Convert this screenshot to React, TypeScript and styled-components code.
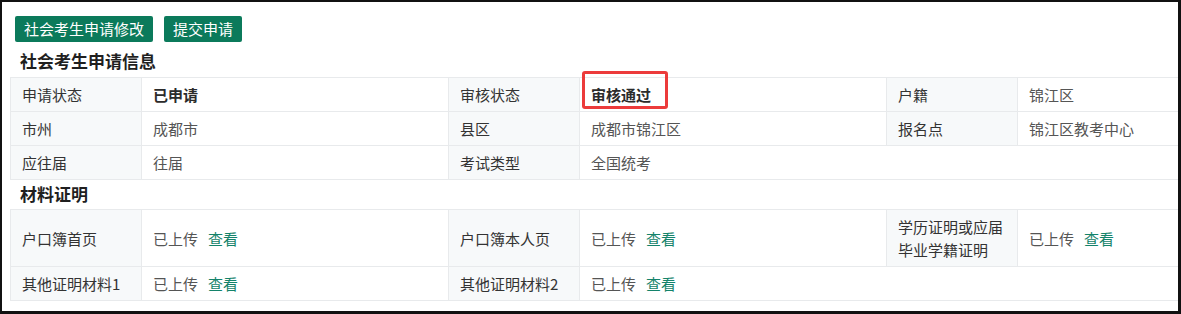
import React from "react";
import styled, { createGlobalStyle } from "styled-components";

const GlobalStyle = createGlobalStyle`
  html, body { margin: 0; padding: 0; background: #fff; }
  body { font-family: "Noto Sans CJK SC", "Noto Sans", sans-serif; }
  * { box-sizing: border-box; }
`;

const Frame = styled.div`
  width: 1181px;
  height: 314px;
  border-style: solid;
  border-color: #111;
  border-width: 2px 3px 3px 2px;
  background: #fff;
  overflow: hidden;
  padding: 0 0 0 8px;
`;

const Toolbar = styled.div`
  display: flex;
  gap: 11px;
  padding: 14px 0 0 5px;
`;

const Button = styled.button`
  height: 26px;
  padding: 0 9px;
  border: none;
  border-radius: 2px;
  background: #0b7a5b;
  color: #fff;
  font-family: inherit;
  font-size: 15px;
  line-height: 26px;
  cursor: pointer;
`;

const SectionTitle = styled.div<{ $top: number; $bottom: number }>`
  font-size: 17px;
  font-weight: 700;
  color: #1f1f1f;
  line-height: 24px;
  padding: ${(p) => p.$top}px 10px ${(p) => p.$bottom}px 10px;
`;

const Table = styled.table`
  width: 1314px;
  table-layout: fixed;
  border-collapse: collapse;
  font-size: 15px;
  line-height: 23px;
`;

const LabelCol = styled.col`
  width: 131px;
`;

const ValueCol = styled.col`
  width: 307px;
`;

const LabelCell = styled.td`
  padding: 5px 11px;
  background: #f7f9fa;
  color: #333;
  border: 1px solid #e8eaec;
  vertical-align: middle;
`;

const ValueCell = styled.td<{ $bold?: boolean }>`
  padding: 5px 11px;
  color: ${(p) => (p.$bold ? "#2b2b2b" : "#555")};
  font-weight: ${(p) => (p.$bold ? 700 : 400)};
  border: 1px solid #e8eaec;
  vertical-align: middle;
  position: relative;
`;

const Highlight = styled.span`
  position: absolute;
  left: 2px;
  top: -7px;
  width: 86px;
  height: 38px;
  border: 3px solid #ec3b3b;
  border-radius: 3px;
  pointer-events: none;
`;

const ViewLink = styled.a`
  margin-left: 10px;
  color: #14836a;
  text-decoration: none;
  cursor: pointer;
`;

type Pair = { label: string; value?: string; bold?: boolean; mark?: boolean };

const infoRows: Pair[][] = [
  [
    { label: "申请状态", value: "已申请", bold: true },
    { label: "审核状态", value: "审核通过", bold: true, mark: true },
    { label: "户籍", value: "锦江区" },
  ],
  [
    { label: "市州", value: "成都市" },
    { label: "县区", value: "成都市锦江区" },
    { label: "报名点", value: "锦江区教考中心" },
  ],
  [
    { label: "应往届", value: "往届" },
    { label: "考试类型", value: "全国统考" },
  ],
];

const materialRows: Pair[][] = [
  [{ label: "户口簿首页" }, { label: "户口簿本人页" }, { label: "学历证明或应届毕业学籍证明" }],
  [{ label: "其他证明材料1" }, { label: "其他证明材料2" }],
];

const ColGroup = () => (
  <colgroup>
    <LabelCol />
    <ValueCol />
    <LabelCol />
    <ValueCol />
    <LabelCol />
    <ValueCol />
  </colgroup>
);

const spanFor = (pairs: Pair[], i: number) =>
  i === pairs.length - 1 ? 1 + (3 - pairs.length) * 2 : 1;

const InfoTable = ({ rows }: { rows: Pair[][] }) => (
  <Table>
    <ColGroup />
    <tbody>
      {rows.map((pairs, r) => (
        <tr key={r}>
          {pairs.map((p, i) => (
            <React.Fragment key={i}>
              <LabelCell>{p.label}</LabelCell>
              <ValueCell $bold={p.bold} colSpan={spanFor(pairs, i)}>
                {p.value}
                {p.mark && <Highlight />}
              </ValueCell>
            </React.Fragment>
          ))}
        </tr>
      ))}
    </tbody>
  </Table>
);

const MaterialTable = ({ rows }: { rows: Pair[][] }) => (
  <Table>
    <ColGroup />
    <tbody>
      {rows.map((pairs, r) => (
        <tr key={r}>
          {pairs.map((p, i) => (
            <React.Fragment key={i}>
              <LabelCell>{p.label}</LabelCell>
              <ValueCell colSpan={spanFor(pairs, i)}>
                已上传<ViewLink>查看</ViewLink>
              </ValueCell>
            </React.Fragment>
          ))}
        </tr>
      ))}
    </tbody>
  </Table>
);

export default function App() {
  return (
    <>
      <GlobalStyle />
      <Frame>
        <Toolbar>
          <Button>社会考生申请修改</Button>
          <Button>提交申请</Button>
        </Toolbar>
        <SectionTitle $top={7} $bottom={4}>社会考生申请信息</SectionTitle>
        <InfoTable rows={infoRows} />
        <SectionTitle $top={2} $bottom={3}>材料证明</SectionTitle>
        <MaterialTable rows={materialRows} />
      </Frame>
    </>
  );
}
